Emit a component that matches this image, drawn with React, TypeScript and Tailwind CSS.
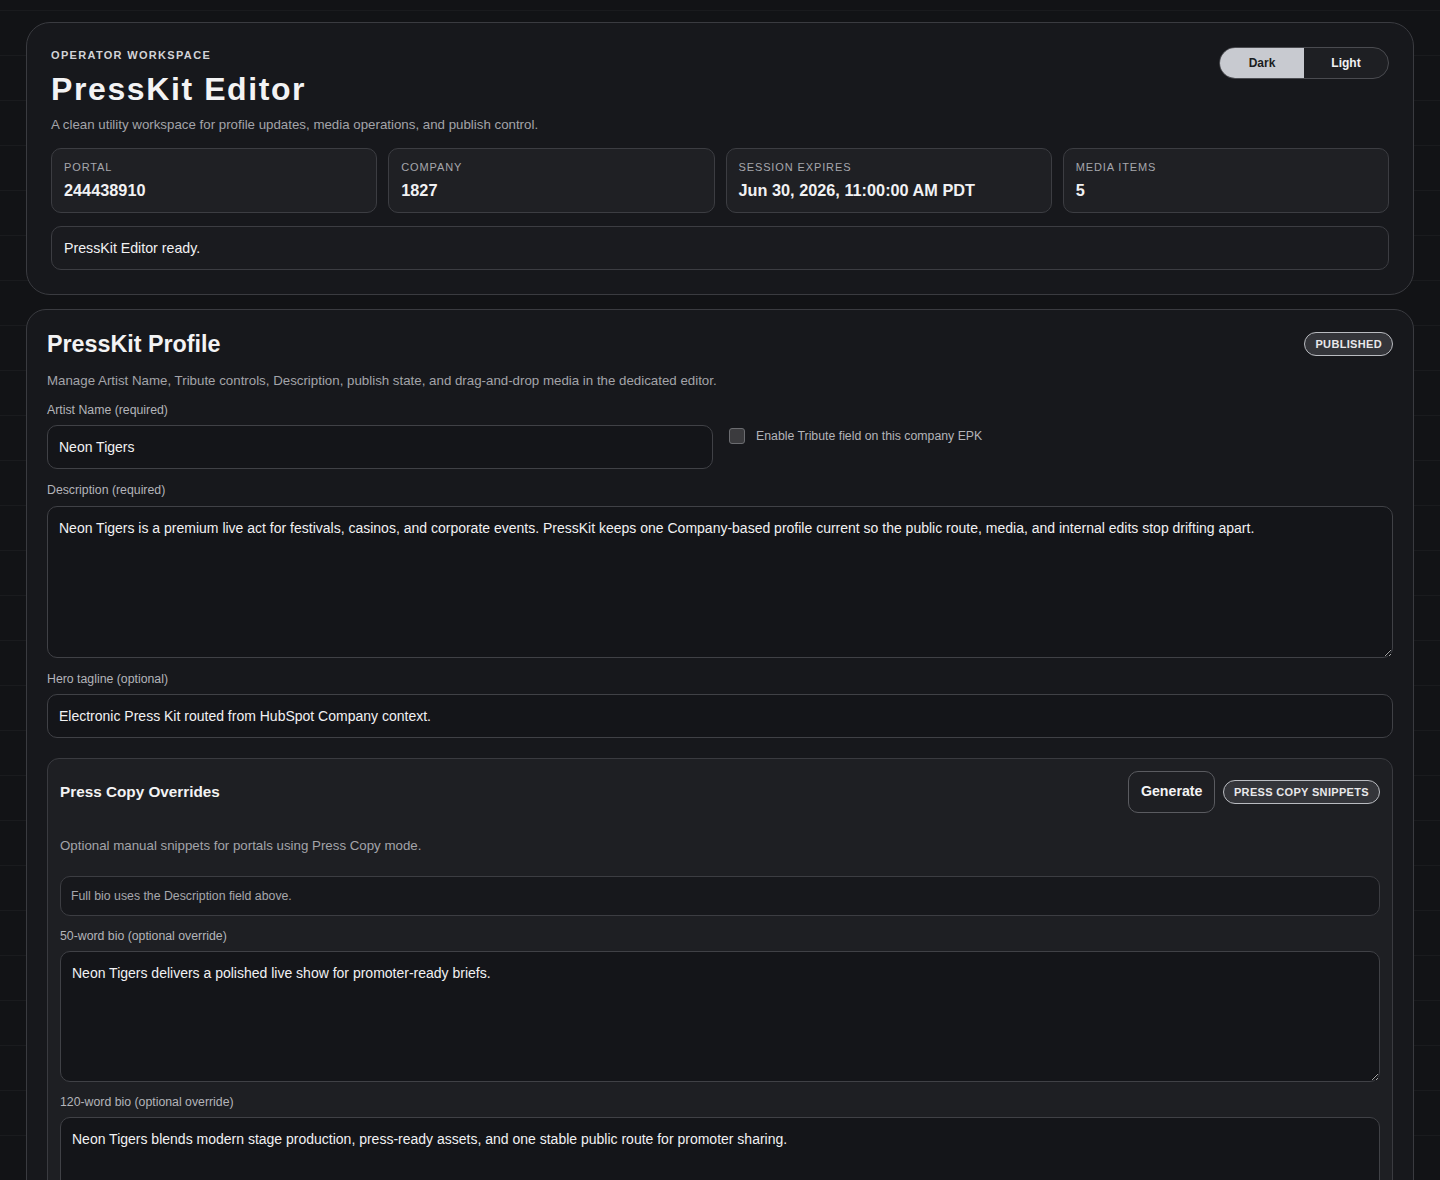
import { useState } from "react"

const stats = [
  { label: "Portal", value: "244438910" },
  { label: "Company", value: "1827" },
  { label: "Session expires", value: "Jun 30, 2026, 11:00:00 AM PDT" },
  { label: "Media items", value: "5" },
]

const inputCls =
  "block w-full rounded-[10px] border border-[#404146] bg-[#141519] px-[11px] py-[11px] text-[14px] leading-5 text-[#f1f1f3] outline-none"

const labelCls = "block text-[12.3px] leading-4 text-[#b3b4b9]"

const pillCls =
  "rounded-full border border-[#b9bbc0] bg-[#34353a] px-[10px] py-[3px] text-[11px] font-bold uppercase leading-4 tracking-[0.03em] text-[#e8e8ea]"

export default function App() {
  const [theme, setTheme] = useState("dark")
  const [tribute, setTribute] = useState(false)

  return (
    <div
      className="min-h-screen bg-[#121316] bg-[linear-gradient(to_bottom,rgba(255,255,255,0.035)_1px,transparent_1px)] bg-[length:100%_45px] bg-[position:0_10px] px-[26px] pt-[22px] pb-10 text-[#f1f1f3]"
      style={{ fontFamily: '"Liberation Sans", Arial, sans-serif' }}
    >
      {/* Workspace header */}
      <section className="rounded-[24px] border border-[#3a3b40] bg-[#17181c] p-6">
        <div className="flex items-start justify-between">
          <div>
            <p className="text-[11px] font-bold uppercase leading-4 tracking-[0.12em] text-[#d2d3d7]">
              Operator workspace
            </p>
            <h1 className="mt-2 text-[32px] font-bold leading-9 tracking-[0.05em] text-[#f3f3f4]">
              PressKit Editor
            </h1>
            <p className="mt-2 text-[13.3px] leading-5 text-[#a3a4a9]">
              A clean utility workspace for profile updates, media operations, and publish control.
            </p>
          </div>
          <div className="flex h-8 overflow-hidden rounded-full border border-[#4a4b50] bg-[#1e1f23]">
            <button
              onClick={() => setTheme("dark")}
              className={
                theme === "dark"
                  ? "w-[84px] bg-[#c8cad0] text-[12px] font-bold text-[#1b1c20]"
                  : "w-[84px] text-[12px] font-bold text-[#f1f1f3]"
              }
            >
              Dark
            </button>
            <button
              onClick={() => setTheme("light")}
              className={
                theme === "light"
                  ? "w-[84px] bg-[#c8cad0] text-[12px] font-bold text-[#1b1c20]"
                  : "w-[84px] text-[12px] font-bold text-[#f1f1f3]"
              }
            >
              Light
            </button>
          </div>
        </div>

        <div className="mt-[13px] grid grid-cols-4 gap-[11px]">
          {stats.map((s) => (
            <div
              key={s.label}
              className="rounded-[10px] border border-[#3c3d42] bg-[#1f2024] px-3 py-[10px]"
            >
              <p className="text-[11px] uppercase leading-4 tracking-[0.08em] text-[#a6a7ac]">{s.label}</p>
              <p className="mt-[3px] text-[16.3px] font-bold leading-6 text-[#f1f1f3]">{s.value}</p>
            </div>
          ))}
        </div>

        <div className="mt-[13px] rounded-[10px] border border-[#3c3d42] bg-[#1a1b1f] px-3 py-[11px] text-[14.2px] leading-5 text-[#f1f1f3]">
          PressKit Editor ready.
        </div>
      </section>

      {/* Profile editor */}
      <section className="mt-[14px] rounded-[20px] border border-[#3a3b40] bg-[#17181c] p-5">
        <div className="flex items-center justify-between">
          <h2 className="text-[23.3px] font-bold leading-7 text-[#f3f3f4]">PressKit Profile</h2>
          <span className={pillCls}>Published</span>
        </div>
        <p className="mt-[13px] text-[13.3px] leading-5 text-[#a3a4a9]">
          Manage Artist Name, Tribute controls, Description, publish state, and drag-and-drop media in the dedicated editor.
        </p>

        <div className="mt-[11px] grid grid-cols-2 items-center gap-[14px]">
          <div>
            <label className={labelCls}>Artist Name (required)</label>
            <input className={`mt-[7px] ${inputCls}`} defaultValue="Neon Tigers" />
          </div>
          <label className="ml-[2px] flex items-center gap-[11px] text-[12.3px] leading-4 text-[#b3b4b9]">
            <input
              type="checkbox"
              checked={tribute}
              onChange={(e) => setTribute(e.target.checked)}
              className="h-4 w-4 appearance-none rounded-[3px] border border-[#6b6c70] bg-[#3b3b3e]"
            />
            Enable Tribute field on this company EPK
          </label>
        </div>

        <div className="mt-[13px]">
          <label className={labelCls}>Description (required)</label>
          <textarea
            className={`mt-2 h-[152px] ${inputCls}`}
            defaultValue="Neon Tigers is a premium live act for festivals, casinos, and corporate events. PressKit keeps one Company-based profile current so the public route, media, and internal edits stop drifting apart."
          />
        </div>

        <div className="mt-[13px]">
          <label className={labelCls}>Hero tagline (optional)</label>
          <input
            className={`mt-[7px] ${inputCls}`}
            defaultValue="Electronic Press Kit routed from HubSpot Company context."
          />
        </div>

        {/* Press copy overrides */}
        <div className="mt-[20px] rounded-[12px] border border-[#3a3b40] bg-[#1e1f23] p-3">
          <div className="flex items-center justify-between">
            <h3 className="text-[15.3px] font-bold leading-5 text-[#f3f3f4]">Press Copy Overrides</h3>
            <div className="flex items-center gap-2">
              <button className="h-[42px] rounded-[10px] border border-[#5a5b60] px-[11.5px] text-[14.2px] font-bold text-[#f3f3f4]">
                Generate
              </button>
              <span className={pillCls}>Press copy snippets</span>
            </div>
          </div>
          <p className="mt-[23px] text-[13.3px] leading-5 text-[#a3a4a9]">
            Optional manual snippets for portals using Press Copy mode.
          </p>
          <div className="mt-[20px] rounded-[10px] border border-[#3c3d42] bg-[#17181c] px-[10px] py-[11px] text-[12.3px] leading-4 text-[#a6a7ac]">
            Full bio uses the Description field above.
          </div>

          <div className="mt-[12px]">
            <label className={labelCls}>50-word bio (optional override)</label>
            <textarea
              className={`mt-[7px] h-[131px] ${inputCls}`}
              defaultValue="Neon Tigers delivers a polished live show for promoter-ready briefs."
            />
          </div>

          <div className="mt-[12px]">
            <label className={labelCls}>120-word bio (optional override)</label>
            <textarea
              className={`mt-[7px] h-[131px] ${inputCls}`}
              defaultValue="Neon Tigers blends modern stage production, press-ready assets, and one stable public route for promoter sharing."
            />
          </div>
        </div>
      </section>
    </div>
  )
}
